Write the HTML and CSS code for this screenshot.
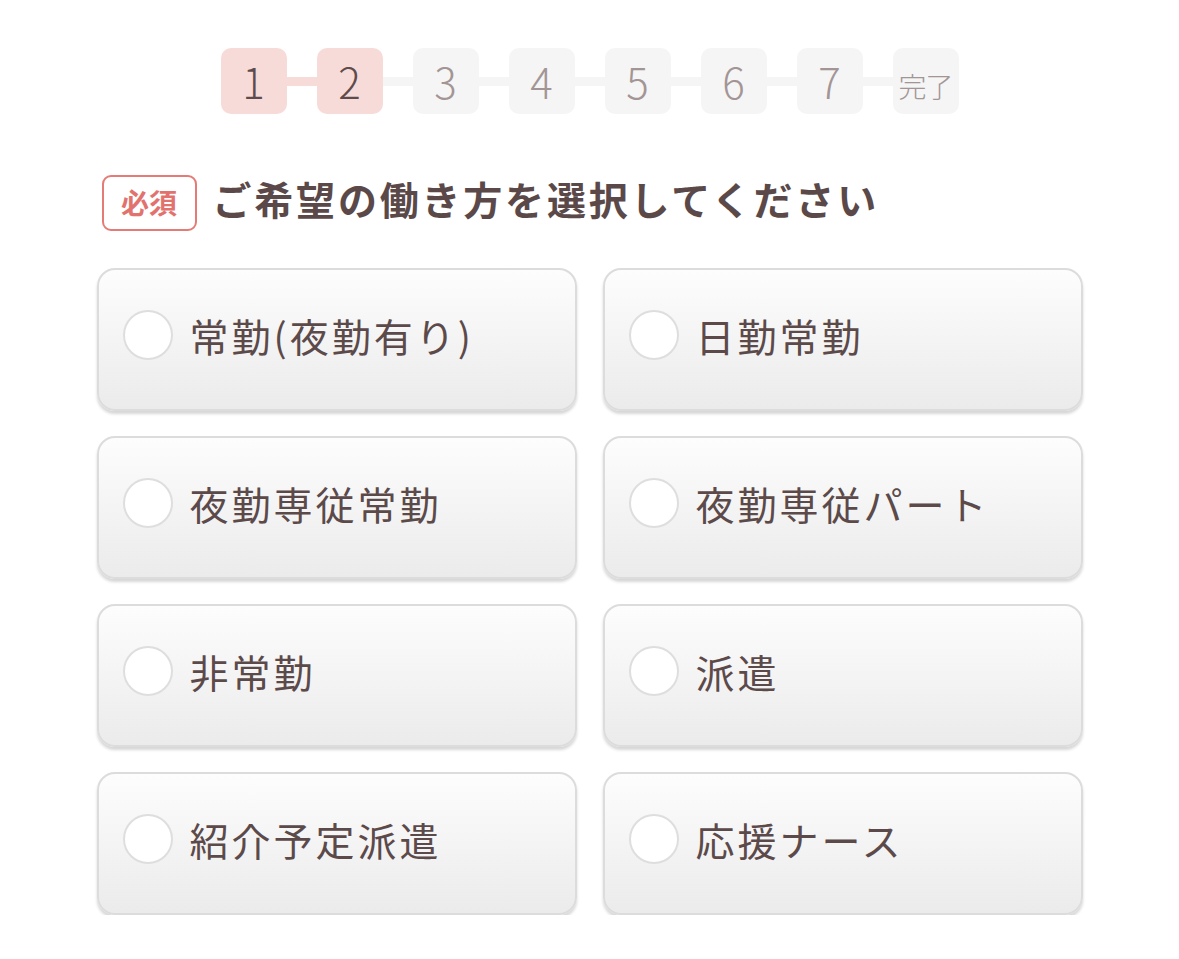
FILE: index.html
```html
<!DOCTYPE html>
<html lang="ja">
<head>
    <meta charset="UTF-8">
    <meta name="viewport" content="width=device-width, initial-scale=1.0">
    <title>ご希望の働き方</title>
    <link rel="stylesheet" href="styles.css">
</head>
<body>

<div id="form-container">

    <div class="steps">
        <div class="step done">1</div>
        <span class="link done"></span>
        <div class="step done">2</div>
        <span class="link"></span>
        <div class="step">3</div>
        <span class="link"></span>
        <div class="step">4</div>
        <span class="link"></span>
        <div class="step">5</div>
        <span class="link"></span>
        <div class="step">6</div>
        <span class="link"></span>
        <div class="step">7</div>
        <span class="link"></span>
        <div class="step finish">完了</div>
    </div>

    <h2 class="question-title">
        <span class="required">必須</span>
        <span class="title-text">ご希望の働き方を選択してください</span>
    </h2>

    <div class="options">
        <label class="option"><input type="radio" name="style"><span class="radio"></span>常勤(夜勤有り)</label>
        <label class="option"><input type="radio" name="style"><span class="radio"></span>日勤常勤</label>
        <label class="option"><input type="radio" name="style"><span class="radio"></span>夜勤専従常勤</label>
        <label class="option"><input type="radio" name="style"><span class="radio"></span>夜勤専従パート</label>
        <label class="option"><input type="radio" name="style"><span class="radio"></span>非常勤</label>
        <label class="option"><input type="radio" name="style"><span class="radio"></span>派遣</label>
        <label class="option"><input type="radio" name="style"><span class="radio"></span>紹介予定派遣</label>
        <label class="option"><input type="radio" name="style"><span class="radio"></span>応援ナース</label>
    </div>

</div>

</body>
</html>
```

FILE: styles.css
```css
body {
    font-family: "Noto Sans CJK JP", "Noto Sans", sans-serif;
    margin: 0;
    background-color: #ffffff;
    color: #5c4a4a;
}

#form-container {
    width: 986px;
    margin: 0 auto;
    padding-top: 48px;
}

/* step indicator */
.steps {
    display: flex;
    justify-content: center;
    align-items: center;
}

.step {
    width: 66px;
    height: 66px;
    border-radius: 10px;
    background-color: #f5f5f5;
    color: #a39595;
    font-size: 42px;
    font-weight: 300;
    display: flex;
    align-items: center;
    justify-content: center;
    line-height: 1;
}

.step.done {
    background-color: #f7dbd8;
    color: #5e4c4c;
}

.step.finish {
    font-size: 28px;
    padding-top: 10px;
    box-sizing: border-box;
    letter-spacing: -1px;
}

.link {
    width: 30px;
    height: 9px;
    background-color: #f5f5f5;
}

.link.done {
    background-color: #f7dbd8;
}

/* question */
.question-title {
    display: flex;
    align-items: center;
    height: 56px;
    margin: 61px 0 37px 5px;
    font-size: 39px;
    line-height: 46px;
    font-weight: bold;
    letter-spacing: 2.8px;
    color: #5b4949;
}

.title-text {
    margin-bottom: 10px;
}

.required {
    display: inline-block;
    box-sizing: border-box;
    width: 95px;
    height: 56px;
    line-height: 50px;
    text-align: center;
    border: 2px solid #e57b76;
    border-radius: 9px;
    color: #e2726d;
    font-size: 28px;
    letter-spacing: 0;
    margin-right: 16px;
}

/* choices */
.options {
    display: grid;
    grid-template-columns: 1fr 1fr;
    column-gap: 26px;
    row-gap: 25px;
}

.option {
    display: flex;
    align-items: center;
    box-sizing: border-box;
    height: 143px;
    padding: 0 0 10px 24px;
    border: 2px solid #dcdcdc;
    border-radius: 18px;
    background: linear-gradient(#fdfdfd, #ebebeb);
    box-shadow: 0 3px 3px rgba(0, 0, 0, 0.16);
    font-size: 39px;
    letter-spacing: 3px;
    color: #5c4a4a;
    cursor: pointer;
}

.option input {
    display: none;
}

.radio {
    width: 50px;
    height: 50px;
    box-sizing: border-box;
    border: 2px solid #dedede;
    border-radius: 50%;
    background-color: #ffffff;
    margin-right: 17px;
    flex-shrink: 0;
}
```
